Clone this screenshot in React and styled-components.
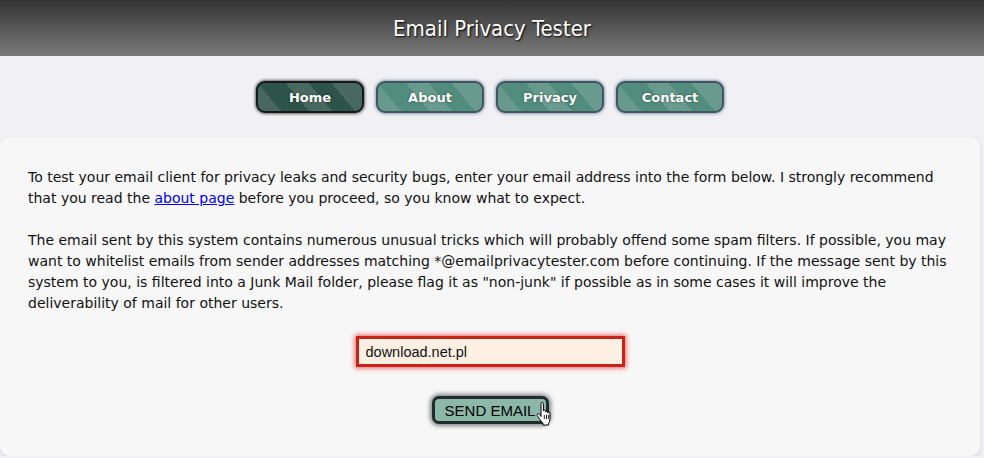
import React from "react";
import styled, { createGlobalStyle } from "styled-components";

const GlobalStyle = createGlobalStyle`
  html, body {
    margin: 0;
    padding: 0;
    background: #f1f1f5;
    font-family: "DejaVu Sans", Verdana, sans-serif;
  }
`;

const Header = styled.header`
  height: 56px;
  background: linear-gradient(to bottom, #333333, #7a7a7a);
  display: flex;
  align-items: center;
  justify-content: center;
`;

const Title = styled.h1`
  margin: 0;
  font-family: "DejaVu Sans Condensed", "DejaVu Sans", sans-serif;
  font-weight: normal;
  font-size: 22px;
  color: #ffffff;
  text-shadow: 1px 1px 2px #000;
`;

const Nav = styled.nav`
  display: flex;
  justify-content: center;
  gap: 12px;
  padding: 25px 4px 24px 0;
`;

const NavButton = styled.a`
  width: 108px;
  height: 32px;
  box-sizing: border-box;
  display: flex;
  align-items: center;
  justify-content: center;
  border-radius: 9px;
  border: 2px solid ${(p) => (p.$active ? "#141a18" : "#3f5560")};
  box-shadow: 0 0 3px 1px ${(p) => (p.$active ? "rgba(0,0,0,0.6)" : "rgba(70,90,120,0.55)")};
  background:
    linear-gradient(
      50deg,
      rgba(255, 255, 255, 0.12) 0 18%,
      transparent 18% 40%,
      rgba(255, 255, 255, 0.13) 40% 58%,
      transparent 58% 76%,
      rgba(255, 255, 255, 0.13) 76% 100%
    ),
    ${(p) => (p.$active ? "#2e5348" : "#528c7c")};
  color: #fff;
  font-weight: bold;
  font-size: 13px;
  text-decoration: none;
  text-shadow: 0 0 2px rgba(0, 0, 0, 0.5);
`;

const Card = styled.main`
  width: 980px;
  box-sizing: border-box;
  background: #f7f7f7;
  border-radius: 9px;
  box-shadow: 0 2px 4px rgba(150, 150, 190, 0.35);
  padding: 30px 28px 32px 28px;
`;

const Para = styled.p`
  margin: 0 0 21px 0;
  font-size: 14px;
  line-height: 21px;
  color: #111;
`;

const Link = styled.a`
  color: #0000ee;
  text-decoration: underline;
`;

const Form = styled.form`
  display: flex;
  flex-direction: column;
  align-items: center;
  padding-top: 1px;
  gap: 29px;
`;

const EmailInput = styled.input`
  width: 269px;
  height: 31px;
  box-sizing: border-box;
  border: 3px solid #c8231a;
  box-shadow: 0 0 5px 1px rgba(220, 30, 20, 0.7);
  background: #fdf0e3;
  padding: 0 7px;
  font-family: "Liberation Sans", Arial, sans-serif;
  font-size: 14.5px;
  color: #111;
  outline: none;
`;

const SendWrap = styled.div`
  position: relative;
`;

const SendButton = styled.button`
  width: 117px;
  height: 28px;
  box-sizing: border-box;
  border-radius: 7px;
  border: 3px solid #222b2e;
  box-shadow: 0 0 4px 2px rgba(30, 40, 45, 0.55);
  background: #8bb8a9;
  font-family: "Liberation Sans", Arial, sans-serif;
  font-size: 15px;
  color: #000;
  padding: 0;
`;

const Cursor = styled.svg`
  position: absolute;
  left: 104px;
  top: 6px;
`;

export default function App() {
  return (
    <>
      <GlobalStyle />
      <Header>
        <Title>Email Privacy Tester</Title>
      </Header>
      <Nav>
        <NavButton $active>Home</NavButton>
        <NavButton>About</NavButton>
        <NavButton>Privacy</NavButton>
        <NavButton>Contact</NavButton>
      </Nav>
      <Card>
        <Para>
          To test your email client for privacy leaks and security bugs, enter your email
          address into the form below. I strongly recommend that you read the{" "}
          <Link href="#">about page</Link> before you proceed, so you know what to expect.
        </Para>
        <Para>
          The email sent by this system contains numerous unusual tricks which will probably
          offend some spam filters. If possible, you may want to whitelist emails from sender
          addresses matching *@emailprivacytester.com before continuing. If the message sent by
          this system to you, is filtered into a Junk Mail folder, please flag it as "non-junk"
          if possible as in some cases it will improve the deliverability of mail for other
          users.
        </Para>
        <Form onSubmit={(e) => e.preventDefault()}>
          <EmailInput defaultValue="download.net.pl" />
          <SendWrap>
            <SendButton type="submit">SEND EMAIL</SendButton>
            <Cursor width="17" height="24" viewBox="0 0 17 24">
              <path
                d="M5 1.5c0-.8.6-1.2 1.2-1.2s1.2.4 1.2 1.2V9c0-.6.5-1 1.1-1s1.1.4 1.1 1v1c0-.6.5-1 1.1-1s1.1.4 1.1 1v1c0-.6.5-1 1.1-1s1.1.4 1.1 1v5.5c0 2.2-.6 3.5-1.5 4.8V23H7v-1.6c-1.3-1.2-2.5-3-3.7-4.8L1.3 13.4c-.4-.7-.2-1.4.4-1.7.6-.3 1.3-.1 1.7.5L5 14.5z"
                fill="#fff"
                stroke="#000"
                strokeWidth="1"
                strokeLinejoin="round"
              />
              <path d="M8.3 13v4M10.5 13v4M12.7 13v4" stroke="#000" strokeWidth="0.9" />
            </Cursor>
          </SendWrap>
        </Form>
      </Card>
    </>
  );
}
